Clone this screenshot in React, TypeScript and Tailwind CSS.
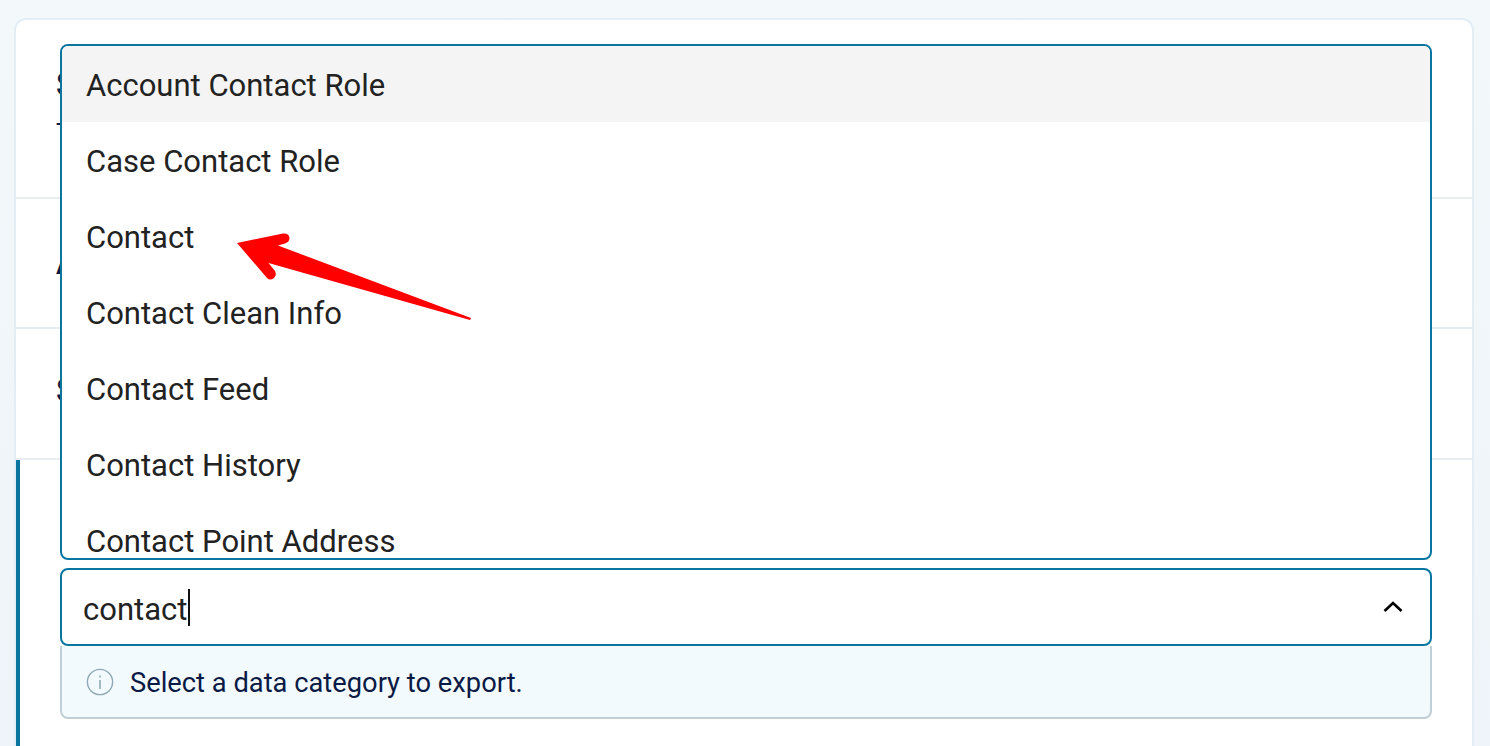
import { useRef, useEffect } from "react";

const options = [
  "Account Contact Role",
  "Case Contact Role",
  "Contact",
  "Contact Clean Info",
  "Contact Feed",
  "Contact History",
  "Contact Point Address",
];

const Arrow = () => (
  <svg className="absolute left-[230px] top-[228px] z-30" width="246" height="96" viewBox="230 228 246 96">
    <path
      d="M237 243 L283 233.5 Q289 233 289.5 238 Q289.5 242 285 243.5 L278 245.5 L471 318 L470 320 L268.5 263 L275 271 Q277 275 274 278 Q270 281 267 278 Z"
      fill="#ff0000"
    />
  </svg>
);

const InfoIcon = () => (
  <svg width="28" height="28" viewBox="0 0 28 28" fill="none" className="shrink-0">
    <circle cx="14" cy="14" r="12.6" stroke="#8ea8b5" strokeWidth="1.4" />
    <rect x="13.2" y="12" width="1.6" height="9" fill="#8ea8b5" />
    <rect x="13.2" y="7.5" width="1.6" height="2" fill="#8ea8b5" />
  </svg>
);

const Section = ({ title, sub, className }: { title: string; sub?: string; className: string }) => (
  <div className={`border-b-2 border-[#e7edf1] pl-[40px] ${className}`}>
    <div className="text-[33px] leading-[40px] font-semibold text-[#0b1a45]">{title}</div>
    {sub && <div className="mt-[11px] text-[26px] leading-[34px] text-[#0b1a45]">{sub}</div>}
  </div>
);

const App = () => {
  const listRef = useRef<HTMLDivElement>(null);

  useEffect(() => {
    if (listRef.current) listRef.current.scrollTop = 0;
  }, []);

  return (
    <div className="relative h-[746px] w-[1490px] overflow-hidden bg-gradient-to-b from-[#f3f8fa] to-[#eef4f9] pl-[14px] pr-[16px] pt-[18px] font-['Roboto',sans-serif]">
      <div className="h-[760px] rounded-t-[12px] border-2 border-[#e3edf3] bg-white">
        <Section title="Select" sub="The data" className="h-[179px] pt-[45px]" />
        <Section title="Action" className="h-[130px] pt-[44px]" />
        <Section title="Scope" className="h-[131px] pt-[42px]" />

        <div className="h-[300px] border-l-4 border-[#0a76a0] pl-[40px] pr-[40px] pt-[108px]">
          <div className="flex h-[78px] items-center rounded-[8px] border-2 border-[#0a76a0] bg-white pl-[21px] pr-[26px]">
            <span className="pt-[6px] text-[31px] text-[#222]">contact</span>
            <span className="ml-[1px] h-[37px] w-[2px] bg-[#111]" />
            <svg width="22" height="14" viewBox="0 0 22 14" fill="none" className="ml-auto">
              <path d="M2.5 11 L11 3 L19.5 11" stroke="#000" strokeWidth="2.6" />
            </svg>
          </div>
          <div className="flex h-[73px] items-center gap-[16px] rounded-b-[8px] border-x-2 border-b-2 border-[#c0ced6] bg-[#f3fafd] pl-[24px]">
            <InfoIcon />
            <span className="pt-[3px] text-[27.3px] text-[#0b1a45]">Select a data category to export.</span>
          </div>
        </div>
      </div>

      <div
        ref={listRef}
        className="absolute left-[60px] top-[44px] z-20 h-[516px] w-[1372px] overflow-hidden rounded-[8px] border-2 border-[#0a76a0] bg-white"
      >
        {options.map((o, i) => (
          <div
            key={o}
            className={`flex h-[76px] shrink-0 items-center pl-[24px] pt-[5px] text-[31px] text-[#222] ${i === 0 ? "bg-[#f4f4f4]" : ""}`}
          >
            {o}
          </div>
        ))}
      </div>

      <Arrow />
    </div>
  );
};

export default App;
